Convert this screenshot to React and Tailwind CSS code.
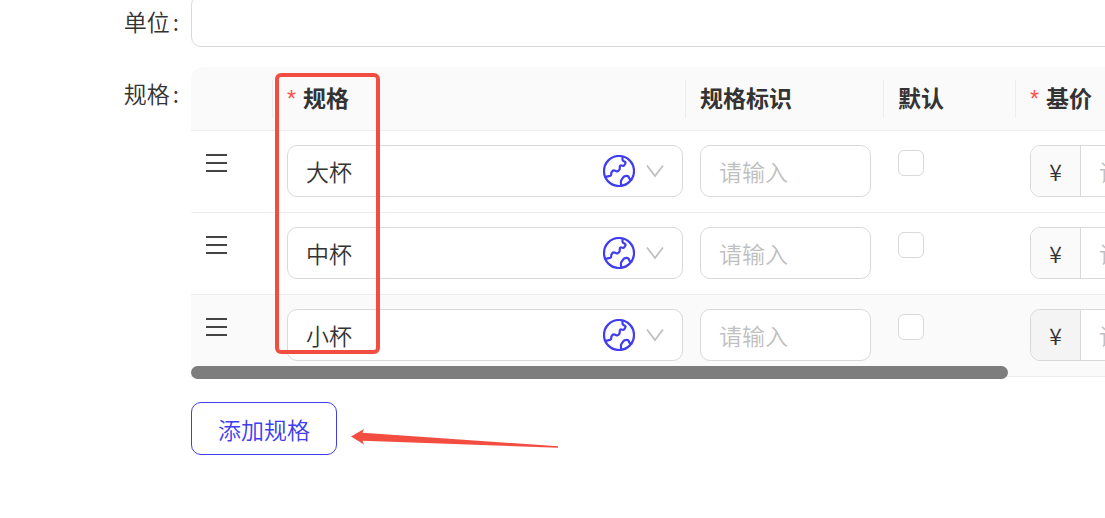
import { useState } from 'react'

const ROWS = [
  { id: 1, size: '大杯' },
  { id: 2, size: '中杯' },
  { id: 3, size: '小杯' },
]

const SIZES = ['大杯', '中杯', '小杯']

function GlobeIcon() {
  return (
    <svg className="w-8 h-8" viewBox="0 0 32 32" fill="none" stroke="#403cf0" strokeWidth="2.2" strokeLinecap="round" strokeLinejoin="round">
      <circle cx="16" cy="16" r="15" />
      <path d="M19.500 2v2.400q0 1.400 1.300 1.900l.8.300q1.400.7.7 2l-1 1.600q-.7 1-1.900.6l-1-.3q-1.500-.3-1.600 1.200l-.1 2q0 .9-.7 1.500l-.6.6q-.9.9-2.100.4l-1.800-.7q-1.300-.4-2.200.7l-.4.500q-.6.700-.6 1.600v.7q0 1.500-1.400 1.900l-4.200 1" />
      <path d="M18.200 30.300l-.3-3.300q-.1-1.200.6-2.200l1.700-2.400q.8-1.100 2.100-1.300l1.500-.2q1.400-.1 1.900 1.100l.4 1q.5 1.300 1.700 1.600l.7.2" />
    </svg>
  )
}

function ChevronIcon() {
  return (
    <svg className="w-5 h-4" viewBox="0 0 20 16" fill="none" stroke="#bfbfbf" strokeWidth="1.7">
      <path d="M2 2.500l8 10.500 8-10.500" />
    </svg>
  )
}

function MenuIcon() {
  return (
    <svg className="block w-[22px] h-5" viewBox="0 0 22 20" stroke="#444" strokeWidth="2">
      <path d="M1 2h21M1 10h21M1 18h21" />
    </svg>
  )
}

function HeadCell({ children, required, last }) {
  return (
    <th className="h-16 p-0 border-b border-[#ededed] bg-[#fafafa] text-left font-bold">
      <div className={`flex items-center h-[38px] pl-[14px] pb-[3px] border-[#ededed] ${last ? '' : 'border-r'}`}>
        {required && <span className="mr-[7px] pt-1 font-normal text-[#ff4d4f] font-['Liberation_Sans',sans-serif]">*</span>}
        {children}
      </div>
    </th>
  )
}

function SpecRow({ row, active }) {
  const [size, setSize] = useState(row.size)
  const cell = 'p-0 pl-[14px] pt-[14px] pb-[15px] align-top border-b border-[#ededed]'

  return (
    <tr className={active ? 'bg-[#fafafa]' : 'bg-white'}>
      <td className={cell}>
        <button type="button" aria-label="排序" className="block pt-2">
          <MenuIcon />
        </button>
      </td>
      <td className={cell}>
        <div className="relative mr-[3px]">
          <select
            aria-label="规格"
            value={size}
            onChange={e => setSize(e.target.value)}
            className="block w-full h-[52px] pl-[18px] pr-20 rounded-[10px] border border-[#d9d9d9] bg-white appearance-none outline-none"
          >
            {SIZES.map(s => <option key={s}>{s}</option>)}
          </select>
          <div className="absolute inset-y-0 right-[18px] flex items-center gap-[10px] pointer-events-none">
            <GlobeIcon />
            <ChevronIcon />
          </div>
        </div>
      </td>
      <td className={cell}>
        <input
          aria-label="规格标识"
          placeholder="请输入"
          className="block w-[171px] h-[52px] px-[18px] rounded-[10px] border border-[#d9d9d9] bg-white outline-none placeholder:text-[#bfbfbf]"
        />
      </td>
      <td className={cell}>
        <input
          type="checkbox"
          aria-label="默认"
          className="block w-[26px] h-[26px] mt-[5px] rounded-md border border-[#d9d9d9] bg-white appearance-none checked:bg-[#403cf0]"
        />
      </td>
      <td className={cell}>
        <div className="flex h-[52px] rounded-[10px] border border-[#d9d9d9] overflow-hidden">
          <span className={`flex items-center justify-center w-[50px] border-r border-[#d9d9d9] ${active ? 'bg-[#f4f4f4]' : 'bg-[#fafafa]'}`}>¥</span>
          <input
            aria-label="基价"
            placeholder="请输入"
            className="flex-1 min-w-0 px-[18px] bg-white outline-none placeholder:text-[#bfbfbf]"
          />
        </div>
      </td>
    </tr>
  )
}

export default function App() {
  return (
    <main className="min-h-screen overflow-hidden bg-white text-[23px] leading-8 font-[350] text-[#333] font-['Noto_Sans_CJK_SC',sans-serif]">
      <form className="-mt-[5px] -mr-8" onSubmit={e => e.preventDefault()}>
        <div className="flex mb-5">
          <label htmlFor="unit" className="w-[191px] pr-3 pt-[10px] shrink-0 text-right">
            单位<span className="ml-[3px]">:</span>
          </label>
          <input id="unit" className="flex-1 min-w-0 h-[52px] px-[18px] rounded-[10px] border border-[#d9d9d9] outline-none" />
        </div>

        <div className="flex">
          <span className="w-[191px] pr-3 pt-[10px] shrink-0 text-right">
            规格<span className="ml-[3px]">:</span>
          </span>
          <div className="flex-1 min-w-0">
            <div className="relative">
              <div className="overflow-hidden rounded-t-xl">
                <table className="table-fixed w-[1140px] border-separate border-spacing-0">
                  <colgroup>
                    <col className="w-[82px]" />
                    <col className="w-[413px]" />
                    <col className="w-[198px]" />
                    <col className="w-[132px]" />
                    <col />
                  </colgroup>
                  <thead>
                    <tr>
                      <HeadCell />
                      <HeadCell required>规格</HeadCell>
                      <HeadCell>规格标识</HeadCell>
                      <HeadCell>默认</HeadCell>
                      <HeadCell required last>基价</HeadCell>
                    </tr>
                  </thead>
                  <tbody>
                    {ROWS.map((row, i) => <SpecRow key={row.id} row={row} active={i === 2} />)}
                  </tbody>
                </table>
              </div>

              {/* Scroll thumb */}
              <div className="absolute left-0 -bottom-0.5 w-[817px] h-[13px] rounded-full bg-[#7d7d7d]" />

              {/* Highlight around the size column */}
              <div className="absolute left-[84px] top-[6px] w-[105px] h-[281px] rounded-md border-4 border-[#f34c40] pointer-events-none" />
            </div>

            <div className="flex items-start mt-[25px]">
              <button type="button" className="h-[53px] w-[146px] rounded-[10px] border border-[#403cf0] text-[#403cf0] bg-white">
                添加规格
              </button>
              <svg className="w-[208px] h-5 ml-[13px] mt-[26px]" viewBox="0 0 208 20" fill="#f34c40">
                <path d="M1 8.500L14 1l-1.500 3.700L208 18.200v1.500L12.500 12.800l1.500 3.700z" />
              </svg>
            </div>
          </div>
        </div>
      </form>
    </main>
  )
}
